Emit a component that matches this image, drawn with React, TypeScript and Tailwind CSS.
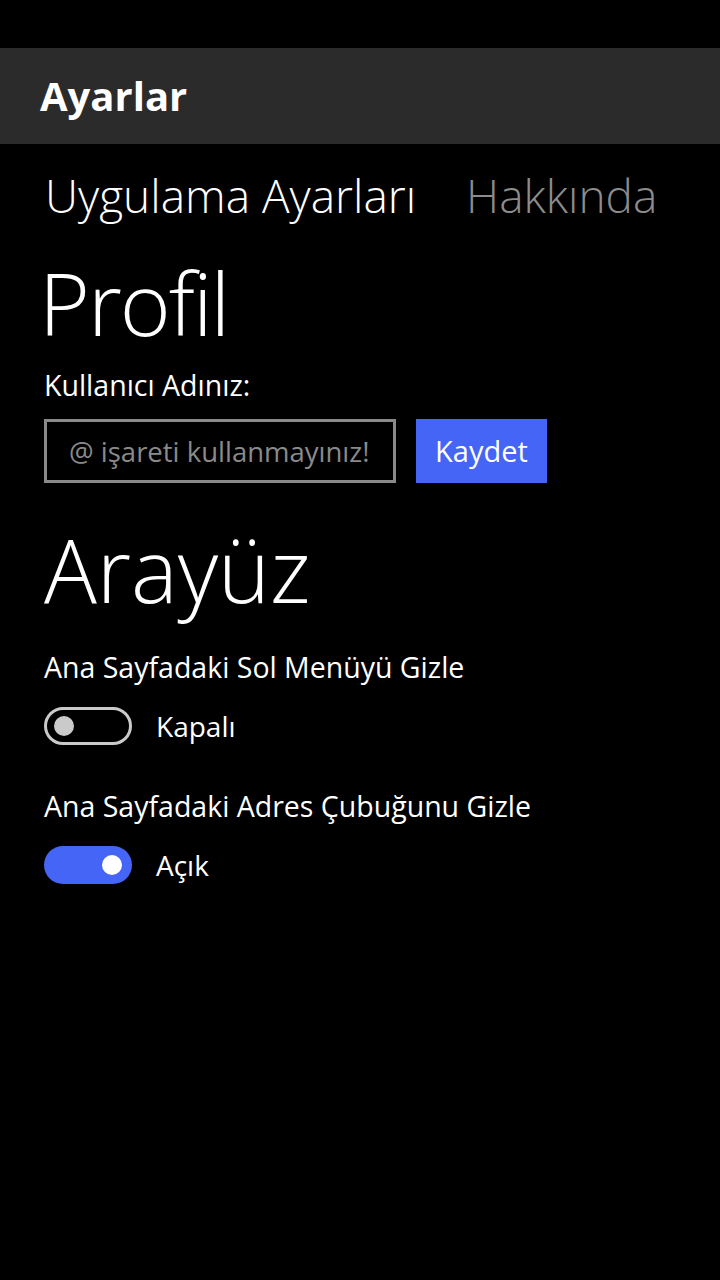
import { useState } from "react"

const font = { fontFamily: '"Open Sans", "Noto Sans", sans-serif' }

function Toggle({ on, label, onChange }: { on: boolean; label: string; onChange: () => void }) {
  return (
    <button className="mt-[24px] flex items-center gap-6" onClick={onChange}>
      <span
        className={`flex h-[38px] w-[88px] items-center rounded-full ${
          on ? "justify-end bg-[#4465f5] px-[10px]" : "justify-start border-[3px] border-[#cacaca] px-[7px]"
        }`}
      >
        <span className={`size-5 rounded-full ${on ? "bg-white" : "bg-[#cacaca]"}`} />
      </span>
      <span className="text-[28px] leading-8 text-white">{label}</span>
    </button>
  )
}

export default function App() {
  const [hideMenu, setHideMenu] = useState(false)
  const [hideBar, setHideBar] = useState(true)

  return (
    <div className="min-h-[1280px] w-full bg-black text-white" style={font}>
      <div className="h-12" />
      <header className="flex h-24 items-center bg-[#2b2b2b] px-10">
        <h1 className="text-[40px] font-bold leading-none">Ayarlar</h1>
      </header>

      <nav className="mt-[25px] flex gap-[50px] px-[45px] text-[46px] font-light leading-[52px]">
        <span className="text-white">Uygulama Ayarları</span>
        <span className="text-[#8c8c8c]">Hakkında</span>
      </nav>

      <main className="flex flex-col items-start px-[44px]">
        <h2 className="mt-[31px] -ml-[5px] text-[87px] font-light leading-[100px] tracking-[-2px]">Profil</h2>
        <label className="mt-[17px] text-[28.5px] leading-8">Kullanıcı Adınız:</label>
        <div className="mt-[18px] flex gap-5">
          <input
            className="h-16 w-[352px] border-[3px] border-[#8a8a8a] bg-black pl-[22px] pr-2 text-[27.5px] text-white outline-none placeholder:text-[#8a8a8a]"
            placeholder="@ işareti kullanmayınız!"
          />
          <button className="h-16 w-[131px] bg-[#4465f5] text-[29px] text-white">Kaydet</button>
        </div>

        <h2 className="mt-[36px] text-[88px] font-light leading-[100px]">Arayüz</h2>

        <p className="mt-[32px] text-[28.5px] leading-8">Ana Sayfadaki Sol Menüyü Gizle</p>
        <Toggle on={hideMenu} label={hideMenu ? "Açık" : "Kapalı"} onChange={() => setHideMenu(!hideMenu)} />

        <p className="mt-[45px] text-[28.5px] leading-8">Ana Sayfadaki Adres Çubuğunu Gizle</p>
        <Toggle on={hideBar} label={hideBar ? "Açık" : "Kapalı"} onChange={() => setHideBar(!hideBar)} />
      </main>
    </div>
  )
}
